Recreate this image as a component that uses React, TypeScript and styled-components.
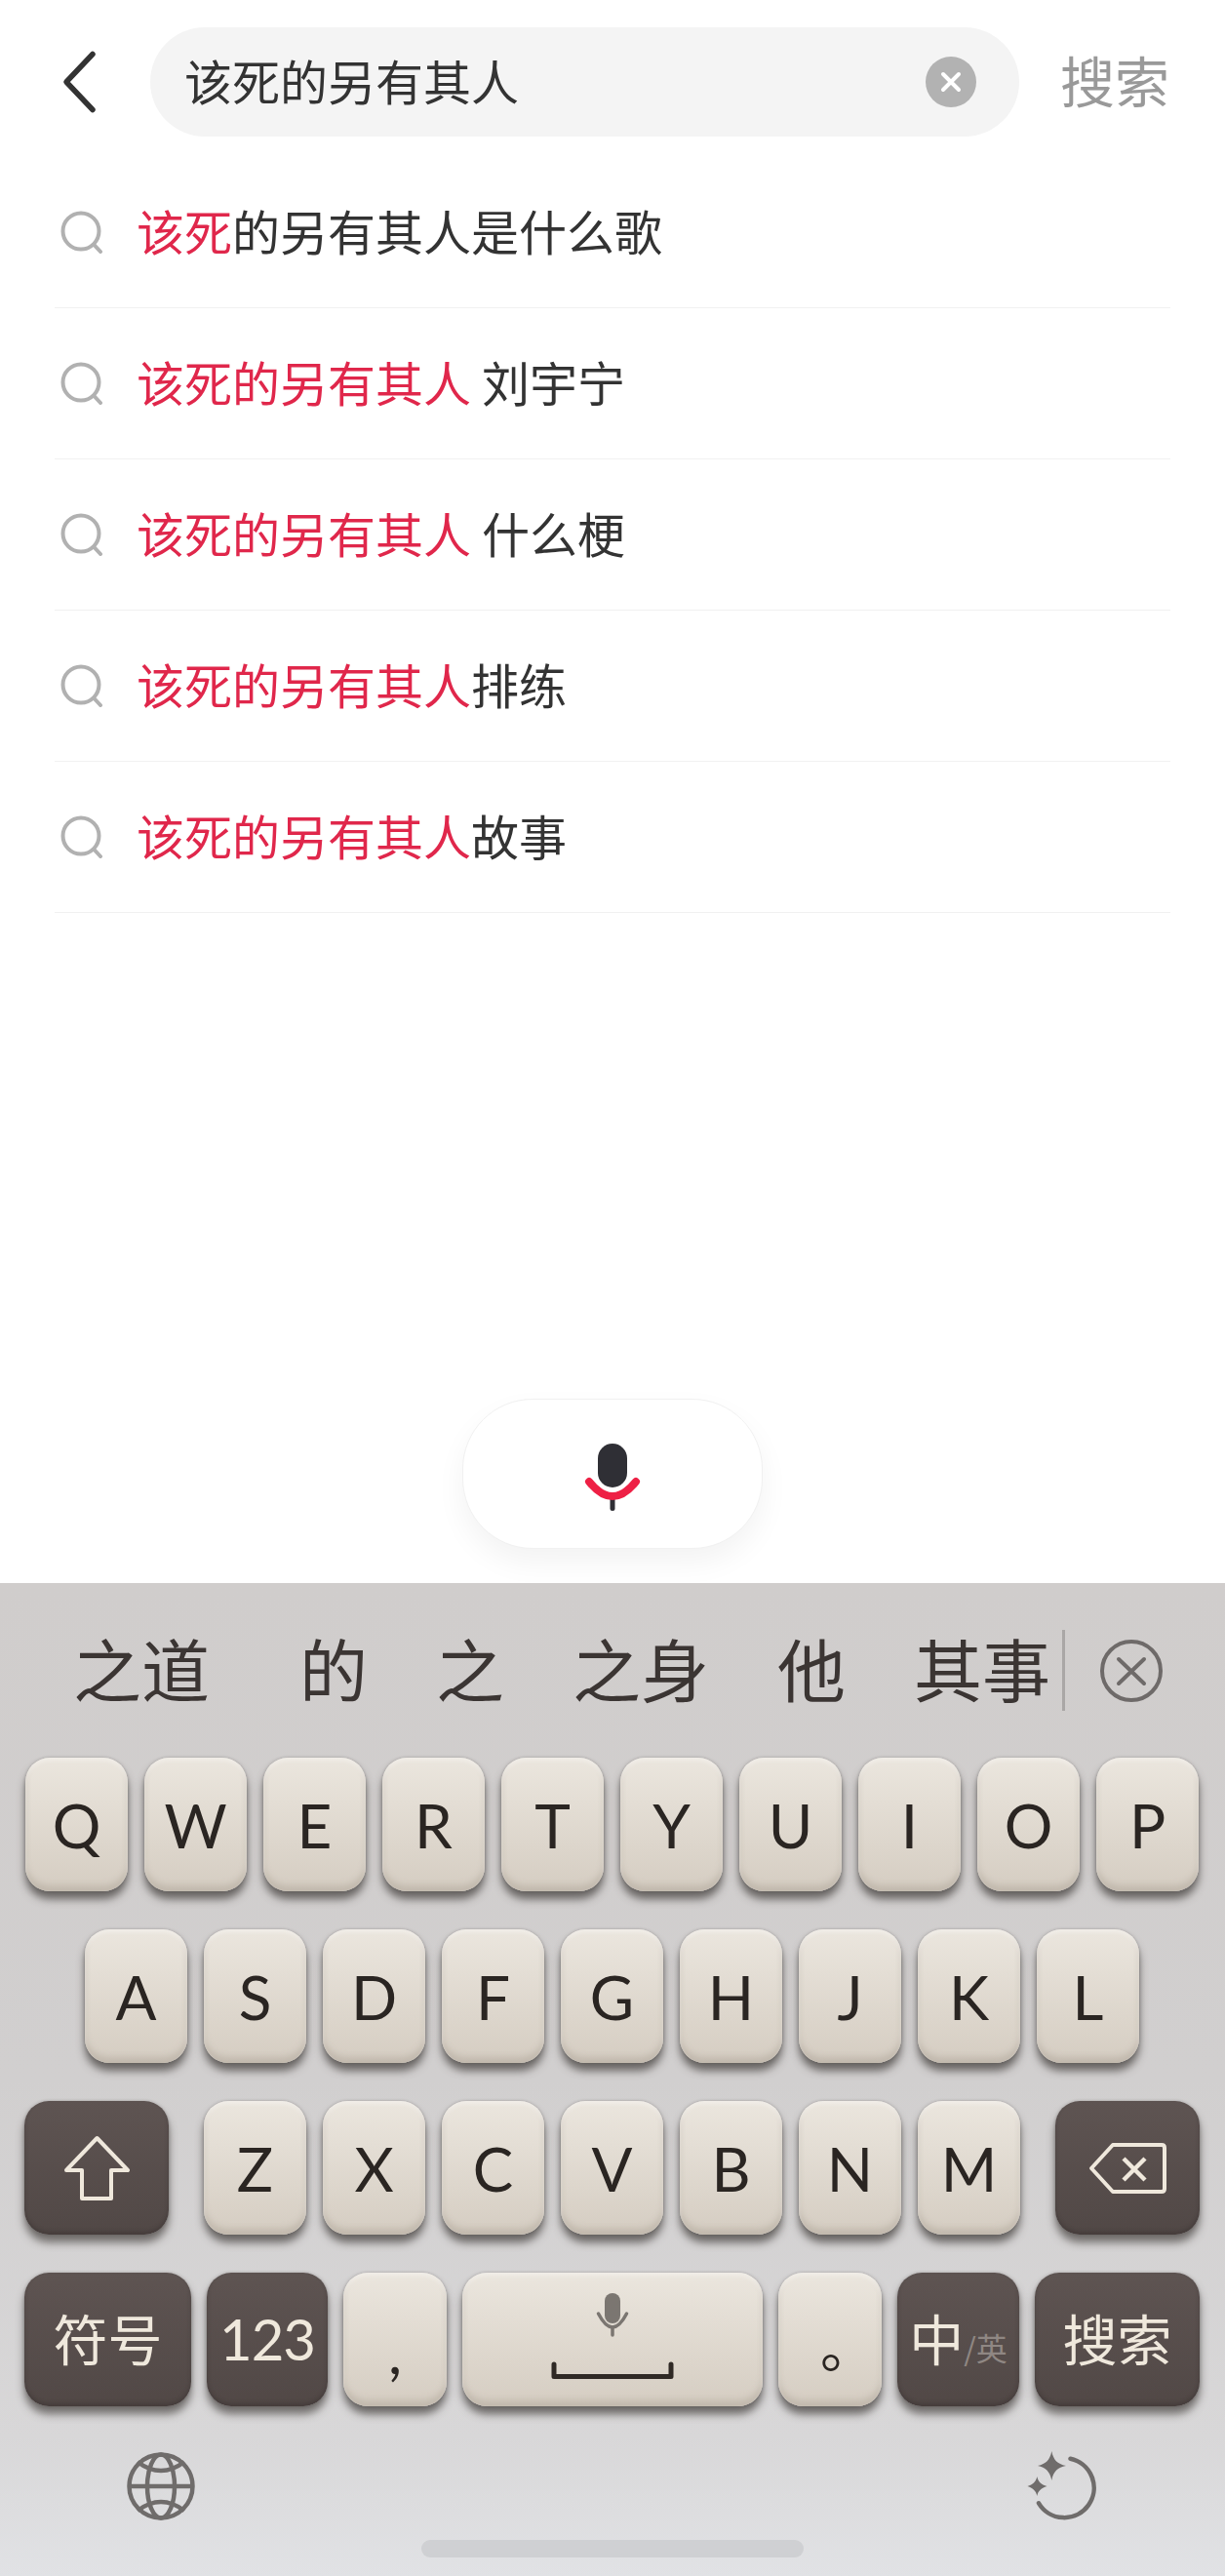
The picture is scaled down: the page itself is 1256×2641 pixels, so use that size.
import React from "react";
import styled, { createGlobalStyle, css } from "styled-components";

const CJK = `"Noto Sans CJK SC", "Noto Sans", sans-serif`;

const GlobalStyle = createGlobalStyle`
  html, body {
    margin: 0;
    padding: 0;
    background: #ffffff;
  }
  * {
    box-sizing: border-box;
  }
`;

const Page = styled.div`
  width: 1256px;
  height: 2641px;
  display: flex;
  flex-direction: column;
  font-family: ${CJK};
  overflow: hidden;
`;

const Main = styled.main`
  flex: 1;
  display: flex;
  flex-direction: column;
`;

const Header = styled.header`
  display: flex;
  align-items: center;
  padding: 28px 57px 0 63px;
`;

const BackButton = styled.button`
  width: 91px;
  height: 112px;
  padding: 0;
  border: none;
  background: none;
  display: flex;
  align-items: center;
`;

const SearchBox = styled.div`
  width: 892px;
  height: 112px;
  border-radius: 56px;
  background: #f4f4f4;
  display: flex;
  align-items: center;
  justify-content: space-between;
  padding: 0 44px 0 35px;
`;

const Query = styled.span`
  font-size: 49px;
  line-height: 1;
  padding-bottom: 6px;
  color: #333333;
`;

const SearchAction = styled.span`
  margin-left: 42px;
  padding-bottom: 7px;
  font-size: 56px;
  line-height: 1;
  white-space: nowrap;
  color: #999999;
`;

const SuggestList = styled.ul`
  list-style: none;
  margin: 21px 56px 0;
  padding: 0;
`;

const SuggestRow = styled.li`
  height: 155px;
  display: flex;
  align-items: center;
  gap: 34px;
  padding-left: 6px;
  border-bottom: 1px solid #f1f1f1;
`;

const SuggestText = styled.span`
  font-size: 49px;
  line-height: 1;
  padding-bottom: 6px;
  color: #333333;
  white-space: pre;
`;

const Match = styled.span`
  color: #e0274b;
`;

const VoiceButton = styled.button`
  width: 308px;
  height: 154px;
  margin: auto auto 35px;
  padding: 6px 0 0;
  border: 1px solid #f1f1f1;
  border-radius: 72px;
  background: #ffffff;
  box-shadow: 0 14px 30px rgba(0, 0, 0, 0.05);
  display: flex;
  align-items: center;
  justify-content: center;
`;

const Keyboard = styled.section`
  height: 1018px;
  display: flex;
  flex-direction: column;
  background: linear-gradient(180deg, #d0cdcc 0%, #d1cfcf 50%, #d8d7d8 86%, #e1e2e5 100%);
`;

const CandidateBar = styled.div`
  height: 179px;
  flex: none;
  display: flex;
  align-items: center;
  padding-left: 75px;
`;

const Candidates = styled.div`
  display: flex;
  gap: 70px;
`;

const Candidate = styled.span<{ $extra?: number }>`
  font-size: 70px;
  line-height: 1;
  padding-bottom: 6px;
  color: #3b3533;
  margin-right: ${(p) => p.$extra ?? 0}px;
`;

const BarDivider = styled.div`
  width: 3px;
  height: 83px;
  margin: 0 36px 0 12px;
  background: #aaa7a6;
`;

const Rows = styled.div`
  display: flex;
  flex-direction: column;
  gap: 39px;
`;

const KeyRow = styled.div<{ $left: number; $spread?: boolean }>`
  display: flex;
  gap: 17px;
  width: 1230px;
  padding-left: ${(p) => p.$left}px;
  ${(p) =>
    p.$spread &&
    css`
      justify-content: space-between;
      gap: 0;
    `}
`;

const LetterGroup = styled.div`
  display: flex;
  gap: 17px;
`;

const BottomRow = styled(KeyRow)`
  gap: 16px;
`;

const Key = styled.div<{ $w?: number; $dark?: boolean }>`
  width: ${(p) => p.$w ?? 105}px;
  height: 137px;
  flex: none;
  border-radius: 25px;
  display: flex;
  align-items: center;
  justify-content: center;
  font-family: Lato, ${CJK};
  font-size: 62px;
  line-height: 1;
  ${(p) =>
    p.$dark
      ? css`
          color: #efe8dc;
          font-family: ${CJK};
          font-size: 56px;
          background: linear-gradient(180deg, #5e5452 0%, #514846 100%);
          box-shadow:
            inset 0 -3px 4px rgba(40, 34, 32, 0.3),
            0 8px 8px rgba(70, 66, 63, 0.7),
            0 0 3px rgba(70, 66, 63, 0.35);
        `
      : css`
          color: #2a2522;
          background: linear-gradient(180deg, #ebe6de 0%, #d5cdc2 100%);
          box-shadow:
            inset 0 3px 4px rgba(255, 255, 255, 0.35),
            inset 0 -6px 6px rgba(165, 155, 142, 0.4),
            0 8px 8px rgba(70, 66, 63, 0.75),
            0 0 3px rgba(70, 66, 63, 0.35);
        `}
`;

const PunctKey = styled(Key)<{ $shift: number }>`
  padding-top: ${(p) => p.$shift}px;
`;

const PeriodMark = styled.span`
  font-family: ${CJK};
  font-size: 56px;
  margin-left: 36px;
`;

const SpaceKey = styled(Key)`
  align-items: flex-start;
  padding-top: 18px;
`;

const CjkLabel = styled.span`
  padding-bottom: 5px;
`;

const DigitLabel = styled.span`
  font-family: Lato, sans-serif;
  font-size: 58px;
  letter-spacing: -1px;
  padding-bottom: 2px;
`;

const SwitchKey = styled(Key)`
  align-items: baseline;
  padding-top: 38px;
`;

const SwitchAlt = styled.span`
  font-size: 32px;
  color: #8f8783;
`;

const UtilityBar = styled.div`
  display: flex;
  align-items: center;
  justify-content: space-between;
  height: 75px;
  margin-top: 44px;
  padding: 0 126px 0 130px;
`;

const HomeBar = styled.div`
  width: 392px;
  height: 18px;
  margin: 18px auto 0;
  border-radius: 9px;
  background: #cfd0d3;
`;

const BackIcon = () => (
  <svg width="36" height="68" viewBox="0 0 36 68" fill="none">
    <path d="M32 5.5 L5 34 L32 62.5" stroke="#333333" strokeWidth="5.5" strokeLinecap="round" strokeLinejoin="round" />
  </svg>
);

const ClearIcon = () => (
  <svg width="52" height="52" viewBox="0 0 52 52">
    <circle cx="26" cy="26" r="26" fill="#b2b2b2" />
    <path d="M18 18 L34 34 M34 18 L18 34" stroke="#ffffff" strokeWidth="4" strokeLinecap="round" />
  </svg>
);

const SearchIcon = () => (
  <svg width="44" height="44" viewBox="0 0 44 44" fill="none">
    <circle cx="21" cy="21" r="18.5" stroke="#b1b1b1" strokeWidth="4" />
    <path d="M34.5 35 L41 42" stroke="#b1b1b1" strokeWidth="4" strokeLinecap="round" />
  </svg>
);

const VoiceIcon = () => (
  <svg width="60" height="72" viewBox="0 0 60 72">
    <rect x="15" y="2" width="30" height="45" rx="15" fill="#2f2f35" />
    <rect x="27.5" y="54" width="5" height="17" rx="2.5" fill="#2f2f35" />
    <path d="M6 41 Q30 71 54 41" fill="none" stroke="#ee2045" strokeWidth="8" strokeLinecap="round" />
  </svg>
);

const DismissIcon = () => (
  <svg width="64" height="64" viewBox="0 0 64 64" fill="none">
    <circle cx="32" cy="32" r="30" stroke="#6e6a69" strokeWidth="4" />
    <path d="M19 20 L45 45 M45 20 L19 45" stroke="#6e6a69" strokeWidth="4" strokeLinecap="round" />
  </svg>
);

const ShiftIcon = () => (
  <svg width="67" height="67" viewBox="0 0 67 67" fill="none">
    <path d="M33.5 3 L65 36 H48 V65 H18 V36 H2 Z" stroke="#efe8dc" strokeWidth="4" strokeLinejoin="round" />
  </svg>
);

const BackspaceIcon = () => (
  <svg width="80" height="52" viewBox="0 0 80 52" fill="none">
    <path d="M25 2 H75 Q78 2 78 5 V47 Q78 50 75 50 H25 L3 26 Z" stroke="#efe8dc" strokeWidth="4" strokeLinejoin="round" />
    <path d="M36 16 L58 38 M58 16 L36 38" stroke="#efe8dc" strokeWidth="4.5" />
  </svg>
);

const SpaceIcon = () => (
  <svg width="130" height="94" viewBox="0 0 130 94" fill="none">
    <rect x="57" y="3" width="16" height="31" rx="8" fill="#7b7671" />
    <path d="M50.5 24 Q65 52 79.5 24" stroke="#7b7671" strokeWidth="3.5" strokeLinecap="round" />
    <path d="M65 38 V46" stroke="#7b7671" strokeWidth="3.5" strokeLinecap="round" />
    <path d="M5 76 V88.5 H125 V76" stroke="#2f2925" strokeWidth="5" strokeLinecap="round" strokeLinejoin="round" />
  </svg>
);

const GlobeIcon = () => (
  <svg width="70" height="70" viewBox="20 20 70 70" fill="none" stroke="#6f6c6b" strokeWidth="4.5">
    <circle cx="55" cy="55" r="32.5" />
    <ellipse cx="55" cy="55" rx="14" ry="32.5" />
    <path d="M22.5 55 H87.5" />
    <path d="M31 30 Q55 48 79 30" />
    <path d="M31 80 Q55 62 79 80" />
  </svg>
);

const RestyleIcon = () => (
  <svg width="77" height="76" viewBox="18 13 77 76" fill="none">
    <path d="M62.5 22.8 A30.5 30.5 0 1 1 30 68.3" stroke="#6f6c6b" strokeWidth="4.5" strokeLinecap="round" />
    <path d="M43.3 15 C45 24 49 28 58 30 C49 32 45 36 43.3 45 C41.5 36 37.5 32 29 30 C37.5 28 41.5 24 43.3 15 Z" fill="#6f6c6b" />
    <path d="M28.3 41 C29.3 46 32 49 38.5 51 C32 53 29.3 56 28.3 61 C27.3 56 24.5 53 18.5 51 C24.5 49 27.3 46 28.3 41 Z" fill="#6f6c6b" />
  </svg>
);

const suggestions: { match: string; rest: string }[] = [
  { match: "该死", rest: "的另有其人是什么歌" },
  { match: "该死的另有其人", rest: " 刘宇宁" },
  { match: "该死的另有其人", rest: " 什么梗" },
  { match: "该死的另有其人", rest: "排练" },
  { match: "该死的另有其人", rest: "故事" },
];

const candidates = ["之道", "的", "之", "之身", "他", "其事"];

export default function App() {
  return (
    <Page>
      <GlobalStyle />
      <Main>
        <Header>
          <BackButton>
            <BackIcon />
          </BackButton>
          <SearchBox>
            <Query>该死的另有其人</Query>
            <ClearIcon />
          </SearchBox>
          <SearchAction>搜索</SearchAction>
        </Header>

        <SuggestList>
          {suggestions.map((s) => (
            <SuggestRow key={s.match + s.rest}>
              <SearchIcon />
              <SuggestText>
                <Match>{s.match}</Match>
                {s.rest}
              </SuggestText>
            </SuggestRow>
          ))}
        </SuggestList>

        <VoiceButton>
          <VoiceIcon />
        </VoiceButton>
      </Main>

      <Keyboard>
        <CandidateBar>
          <Candidates>
            {candidates.map((c, i) => (
              <Candidate key={c} $extra={i === 0 ? 22 : 0}>
                {c}
              </Candidate>
            ))}
          </Candidates>
          <BarDivider />
          <DismissIcon />
        </CandidateBar>

        <Rows>
          <KeyRow $left={26}>
            {"QWERTYUIOP".split("").map((k) => (
              <Key key={k}>{k}</Key>
            ))}
          </KeyRow>
          <KeyRow $left={87}>
            {"ASDFGHJKL".split("").map((k) => (
              <Key key={k}>{k}</Key>
            ))}
          </KeyRow>
          <KeyRow $left={25} $spread>
            <Key $w={148} $dark>
              <ShiftIcon />
            </Key>
            <LetterGroup>
              {"ZXCVBNM".split("").map((k) => (
                <Key key={k}>{k}</Key>
              ))}
            </LetterGroup>
            <Key $w={148} $dark>
              <BackspaceIcon />
            </Key>
          </KeyRow>
          <BottomRow $left={25}>
            <Key $w={171} $dark>
              <CjkLabel>符号</CjkLabel>
            </Key>
            <Key $w={124} $dark>
              <DigitLabel>123</DigitLabel>
            </Key>
            <PunctKey $w={106} $shift={22}>
              ,
            </PunctKey>
            <SpaceKey $w={308}>
              <SpaceIcon />
            </SpaceKey>
            <PunctKey $w={106} $shift={8}>
              <PeriodMark>。</PeriodMark>
            </PunctKey>
            <SwitchKey $w={125} $dark>
              中<SwitchAlt>/英</SwitchAlt>
            </SwitchKey>
            <Key $w={169} $dark>
              <CjkLabel>搜索</CjkLabel>
            </Key>
          </BottomRow>
        </Rows>

        <UtilityBar>
          <GlobeIcon />
          <RestyleIcon />
        </UtilityBar>
        <HomeBar />
      </Keyboard>
    </Page>
  );
}
